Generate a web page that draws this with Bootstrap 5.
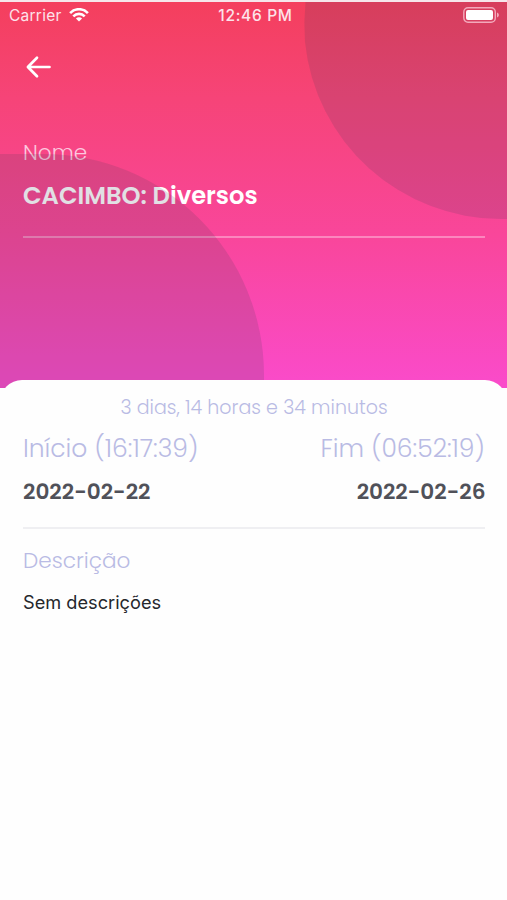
<!DOCTYPE html>
<html lang="pt">
<head>
<meta charset="utf-8">
<meta name="viewport" content="width=device-width, initial-scale=1">
<title>CACIMBO: Diversos</title>
<link href="https://cdn.jsdelivr.net/npm/bootstrap@5.3.0/dist/css/bootstrap.min.css" rel="stylesheet">
<style>
  body { font-family: Poppins, Inter, "Liberation Sans", sans-serif; background: #fefefe; }
  .hero { height: 388px; border-top: 2px solid #f6e6ea; background: linear-gradient(#f43f5d 0, #f64478 25%, #f9469a 60%, #fa4bcb 100%); }
  .hero-shapes { left: 0; top: 0; pointer-events: none; }
  .status { z-index: 1; height: 26px; padding: 0 8px 0 9px; font-family: Inter, sans-serif; color: #fde3ea; }
  .status-side { width: 90px; }
  .carrier { font-size: 15.5px; letter-spacing: .25px; margin-right: 7px; padding-top: 1px; }
  .clock { font-size: 15.5px; font-weight: 500; letter-spacing: .7px; padding: 1px 0 0 3px; }
  .back { margin: 26px 0 0 25px; width: 28px; height: 26px; }
  .px-page { padding-left: 23px; padding-right: 22px; }
  .label-name { margin-top: 59px; font-size: 21.6px; line-height: 28px; font-weight: 300; color: #fdc8df; }
  .title { margin: 13px 0 0; font-size: 24.2px; line-height: 32px; font-weight: 600; color: #fff; }
  .rule-light { margin-top: 24px; height: 2px; background: #ffffff59; }
  .sheet { margin-top: -8.5px; border-radius: 22px 22px 0 0; background: #fefefe; min-height: 520px; padding-top: 15px; }
  .tone { color: #b9bbe4; font-weight: 300; }
  .duration { font-size: 19px; line-height: 26px; }
  .when { margin-top: 10px; font-size: 25px; line-height: 36px; }
  .day { margin-top: 10px; font-size: 21.6px; line-height: 30px; font-weight: 600; color: #505159; }
  .text-end .day { margin-right: -.5px; }
  .rule-dark { margin-top: 20px; height: 2px; background: #efeff2; }
  .label-desc { margin-top: 17px; font-size: 21.6px; line-height: 30px; }
  .desc { margin-top: 13px; font-family: Inter, sans-serif; font-size: 18.2px; line-height: 26px; color: #25272c; }
</style>
</head>
<body>
<header class="hero position-relative">
  <div class="status position-relative d-flex justify-content-between align-items-center">
    <div class="status-side d-flex align-items-center">
      <span class="carrier">Carrier</span>
      <svg width="20" height="14" viewBox="0 0 20 14" fill="none" stroke="#fff" stroke-width="2.6"><path d="M1.1 5.1C6-.1 14-.1 18.9 5.1M4.3 8.3c3.2-3.3 8.200-3.300 11.400 0"/><path d="M10 13.600 6.900 10.500c1.700-1.600 4.500-1.600 6.200 0z" fill="#fff" stroke="none"/></svg>
    </div>
    <span class="clock">12:46 PM</span>
    <div class="status-side d-flex justify-content-end">
      <svg width="37" height="16" viewBox="0 0 37 16"><rect x="1.800" y=".8" width="31.500" height="14.400" rx="4.200" fill="none" stroke="#f3a9bb" stroke-width="1.400"/><rect x="4" y="3" width="27" height="10" rx="2" fill="#fff"/><path d="M35 5.500c2.500 1 2.500 4 0 5z" fill="#f3a9bb"/></svg>
    </div>
  </div>
  <svg class="back d-block" viewBox="0 0 28 26" fill="none" stroke="#fff" stroke-width="2.700" stroke-linecap="round" stroke-linejoin="round"><path d="M24.500 13H3M12 3.800 2.900 13l9.100 9.200"/></svg>
  <div class="px-page">
    <div class="label-name">Nome</div>
    <h1 class="title">CACIMBO: Diversos</h1>
    <div class="rule-light"></div>
  </div>
  <svg class="hero-shapes position-absolute" width="507" height="386" viewBox="0 2 507 386" fill="#424058" fill-opacity=".16"><path d="M305.500 2Q303.500 22 305 42A197 197 0 0 0 501 219H507V2z"/><path d="M0 154H43A221 221 0 0 1 264 375V388H0z"/></svg>
</header>
<main class="sheet position-relative px-page">
  <div class="tone duration text-center">3 dias, 14 horas e 34 minutos</div>
  <div class="d-flex justify-content-between">
    <div>
      <div class="tone when">Início (16:17:39)</div>
      <div class="day">2022-02-22</div>
    </div>
    <div class="text-end">
      <div class="tone when">Fim (06:52:19)</div>
      <div class="day">2022-02-26</div>
    </div>
  </div>
  <div class="rule-dark"></div>
  <div class="tone label-desc">Descrição</div>
  <div class="desc">Sem descrições</div>
</main>
<script src="https://cdn.jsdelivr.net/npm/bootstrap@5.3.0/dist/js/bootstrap.bundle.min.js"></script>
</body>
</html>
